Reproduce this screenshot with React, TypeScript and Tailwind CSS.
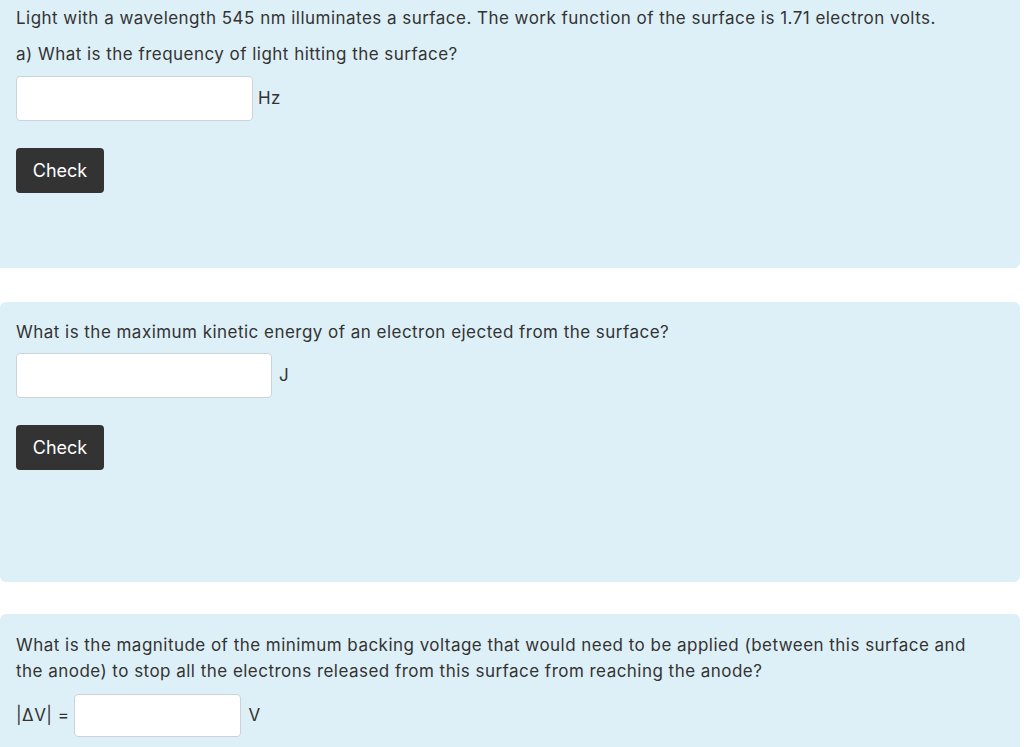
const font = { fontFamily: 'Inter, "Noto Sans", sans-serif' }

function AnswerInput({ width, unit, unitGap }: { width: string; unit: string; unitGap: string }) {
  return (
    <div className="flex items-center">
      <input
        type="text"
        className={`${width} h-[45px] rounded-[4px] border border-[#ccd3d8] bg-white outline-none`}
      />
      <span className={`${unitGap} text-[#333]`}>{unit}</span>
    </div>
  )
}

function CheckButton() {
  return (
    <button className="h-[45px] w-[88px] rounded-[4px] bg-[#333] text-[18px] tracking-normal text-white">Check</button>
  )
}

export default function App() {
  return (
    <div className="h-[747px] w-[1024px] overflow-hidden bg-white text-[17px] tracking-[0.47px] text-[#333]" style={font}>
      {/* part a */}
      <div className="mt-[-12px] mr-[4px] h-[280px] rounded-r-md bg-[#def0f7] px-[16px] pt-[17px]">
        <p className="leading-[26px]">
          Light with a wavelength 545 nm illuminates a surface. The work function of the surface is 1.71 electron volts.
        </p>
        <p className="mt-[10px] leading-[26px]">a) What is the frequency of light hitting the surface?</p>
        <div className="mt-[9px]">
          <AnswerInput width="w-[237px]" unit="Hz" unitGap="ml-[5px]" />
        </div>
        <div className="mt-[27px]">
          <CheckButton />
        </div>
      </div>

      {/* part b */}
      <div className="mt-[34px] mr-[4px] h-[280px] rounded-md bg-[#def0f7] px-[16px] pt-[17px]">
        <p className="leading-[26px]">What is the maximum kinetic energy of an electron ejected from the surface?</p>
        <div className="mt-[8px]">
          <AnswerInput width="w-[256px]" unit="J" unitGap="ml-[7px]" />
        </div>
        <div className="mt-[27px]">
          <CheckButton />
        </div>
      </div>

      {/* part c */}
      <div className="mt-[32px] mr-[4px] h-[200px] rounded-md bg-[#def0f7] pl-[16px] pr-[40px] pt-[18px]">
        <p className="leading-[26px]">
          What is the magnitude of the minimum backing voltage that would need to be applied (between this surface and
          the anode) to stop all the electrons released from this surface from reaching the anode?
        </p>
        <div className="mt-[10px] flex items-center">
          <span className="mr-[5px]">|ΔV| =</span>
          <input
            type="text"
            className="h-[43px] w-[167px] rounded-[4px] border border-[#ccd3d8] bg-white outline-none"
          />
          <span className="ml-[7px]">V</span>
        </div>
      </div>
    </div>
  )
}
